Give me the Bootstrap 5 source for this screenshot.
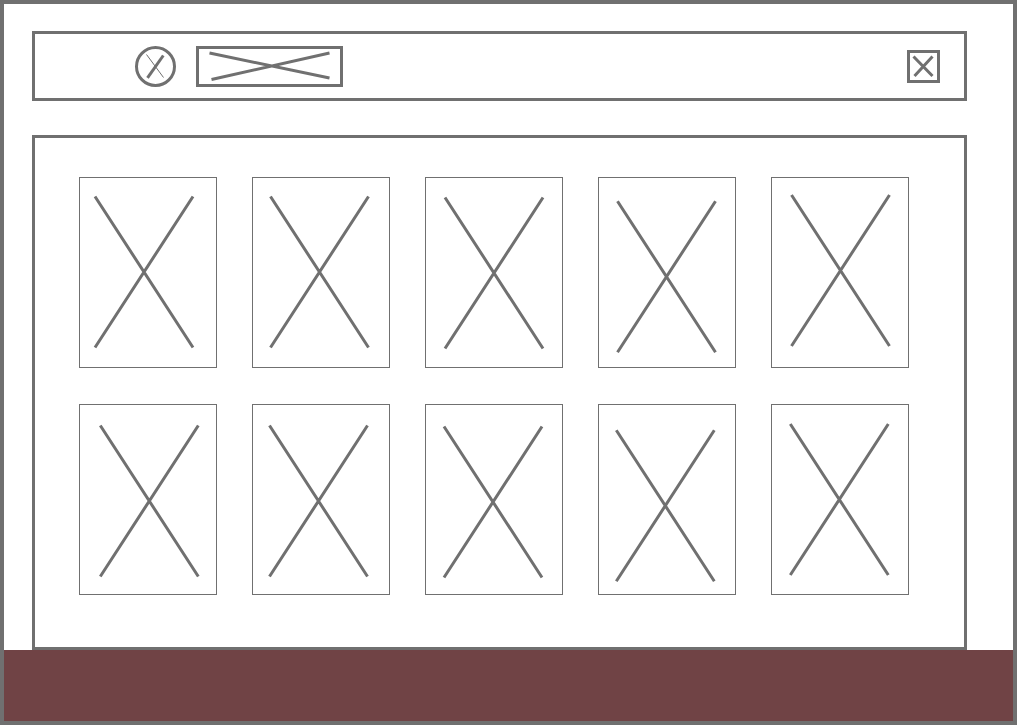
<!DOCTYPE html>
<html lang="en">
<head>
<meta charset="utf-8">
<meta name="viewport" content="width=device-width, initial-scale=1">
<title>Gallery wireframe</title>
<link href="https://cdn.jsdelivr.net/npm/bootstrap@5.3.0/dist/css/bootstrap.min.css" rel="stylesheet">
<style>
  :root { --ink: #707070; --wine: #704345; }
  body { font-family: "Liberation Sans", Arial, sans-serif; }
  svg { display: block; fill: none; stroke: var(--ink); stroke-width: 3; }
  .frame { border: 4px solid var(--ink); }
  .frame-body { padding: 27px 46px 0 28px; }
  .outlined { border: 3px solid var(--ink); border-radius: 0; }
  .topbar { padding: 12px 24px 11px 100px; margin-bottom: 34px; gap: 20px; }
  .avatar { width: 41px; height: 41px; }
  .title-slot { width: 147px; height: 41px; }
  .close-box { width: 33px; height: 33px; }
  .panel { padding: 39px 55px 52px 44px; }
  .tiles { display: grid; grid-template-columns: repeat(5, 1fr); gap: 36px 35px; }
  .tile { border: 1px solid var(--ink); border-radius: 0; }
  .tile svg { width: 100%; height: auto; }
  .bottom-bar { background: var(--wine); min-height: 71px; }
</style>
</head>
<body>
<div class="frame d-flex flex-column min-vh-100 bg-white">
  <div class="frame-body">
    <header class="topbar outlined d-flex align-items-center">
      <button type="button" class="avatar outlined btn p-0 rounded-circle" aria-label="Profile">
        <svg width="35" height="35" viewBox="0 0 35 35"><path stroke-width="1" d="M8.500 5.500 25.500 28.500"/><path d="M25.300 6.500 9.500 28.800"/></svg>
      </button>
      <div class="title-slot outlined">
        <svg width="141" height="35" viewBox="0 0 141 35"><path d="M10.500 4 130.500 29M12.500 30.500 130.500 4"/></svg>
      </div>
      <button type="button" class="close-box outlined btn p-0 ms-auto" aria-label="Close">
        <svg width="27" height="27" viewBox="0 0 27 27"><path d="M3.500 3.500 22.500 23M22.500 3.500 4.500 23"/></svg>
      </button>
    </header>
    <main class="panel outlined">
      <div class="tiles">
        <div class="tile card"><svg viewBox="0 0 136 189"><path d="M15 18.500l98 151M113 18.500l-98 151"/></svg></div>
        <div class="tile card"><svg viewBox="0 0 136 189"><path d="M17.500 18.500l98 151M115.500 18.500l-98 151"/></svg></div>
        <div class="tile card"><svg viewBox="0 0 136 189"><path d="M19 19.500l98 151M117 19.500l-98 151"/></svg></div>
        <div class="tile card"><svg viewBox="0 0 136 189"><path d="M18.500 23.200l98 151M116.500 23.200l-98 151"/></svg></div>
        <div class="tile card"><svg viewBox="0 0 136 189"><path d="M19.500 17l98 151M117.500 17l-98 151"/></svg></div>
        <div class="tile card"><svg viewBox="0 0 136 189"><path d="M20.300 20.500l98 151M118.300 20.500l-98 151"/></svg></div>
        <div class="tile card"><svg viewBox="0 0 136 189"><path d="M16.500 20.500l98 151M114.500 20.500l-98 151"/></svg></div>
        <div class="tile card"><svg viewBox="0 0 136 189"><path d="M18 21.500l98 151M116 21.500l-98 151"/></svg></div>
        <div class="tile card"><svg viewBox="0 0 136 189"><path d="M17.300 25.200l98 151M115.300 25.200l-98 151"/></svg></div>
        <div class="tile card"><svg viewBox="0 0 136 189"><path d="M18.300 19l98 151M116.300 19l-98 151"/></svg></div>
      </div>
    </main>
  </div>
  <footer class="bottom-bar flex-grow-1"></footer>
</div>
<script src="https://cdn.jsdelivr.net/npm/bootstrap@5.3.0/dist/js/bootstrap.bundle.min.js"></script>
</body>
</html>
